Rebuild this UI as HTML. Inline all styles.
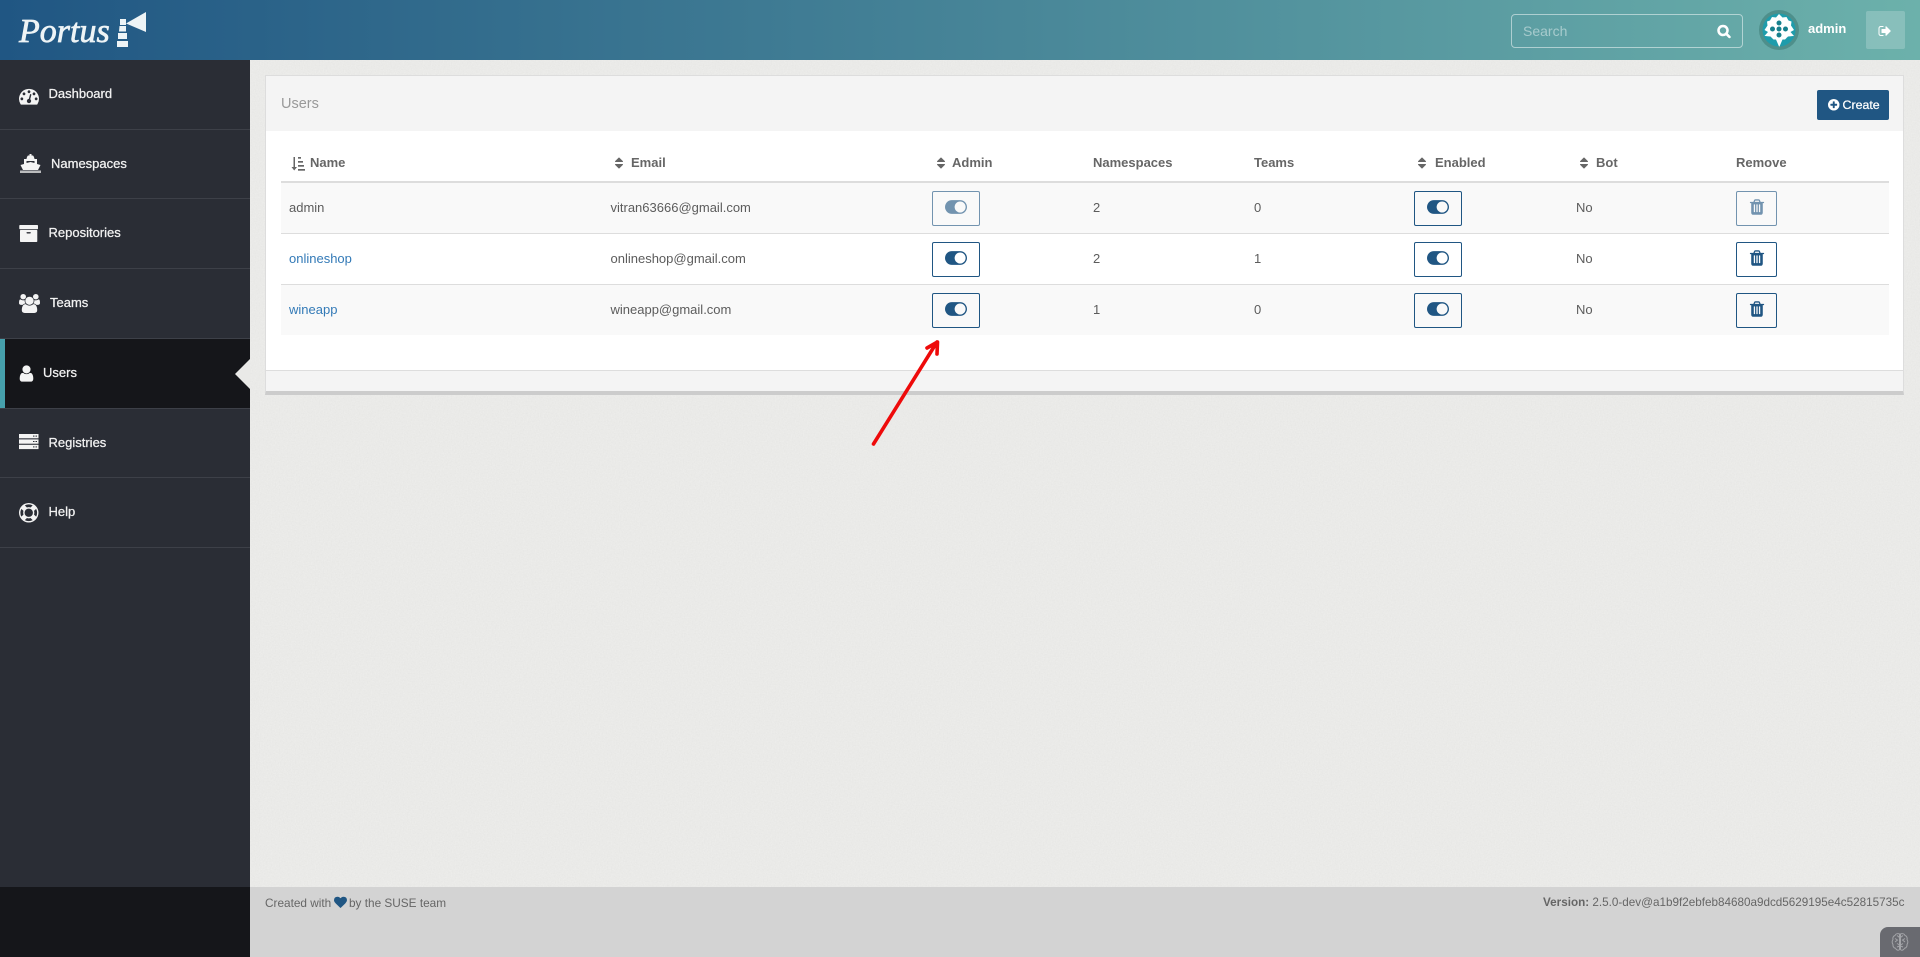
<!DOCTYPE html>
<html lang="en"><head><meta charset="utf-8"><title>Users | Portus</title>
<style>
html,body{margin:0;padding:0;width:1920px;height:957px;overflow:hidden;background:#e9e9e7;font-family:"Liberation Sans",Arial,sans-serif;font-size:13px;color:#5c5c5c}
*{box-sizing:border-box}
.a{position:absolute}
.t{position:absolute;line-height:20px;white-space:nowrap}
svg{position:absolute;display:block;overflow:visible}
#hd{left:0;top:0;width:1920px;height:60px;background:linear-gradient(90deg,#205683 0%,#6cb1ab 100%)}
#sb{left:0;top:60px;width:250px;height:827px;background:#2a2d35}
.nv{position:absolute;left:0;width:250px;height:1px;background:#3d4048}
.m{color:#f2f2f2;-webkit-text-stroke:.25px #f2f2f2;font-size:13px}
.h{color:#666;font-weight:bold;font-size:13px}
.btn{position:absolute;width:48px;height:35px;border:1px solid #205683;border-radius:2px}
.rm{width:41px}
.off{opacity:.62}
a{color:#337ab7;text-decoration:none}
</style></head><body>
<svg width="0" height="0" style="left:0;top:0"><defs>
<symbol id="sort" viewBox="0 0 1792 1792"><path fill="#666" d="M1408 1088q0 26-19 45l-448 448q-19 19-45 19t-45-19l-448-448q-19-19-19-45t19-45 45-19h896q26 0 45 19t19 45zm0-384q0 26-19 45t-45 19h-896q-26 0-45-19t-19-45 19-45l448-448q19-19 45-19t45 19l448 448q19 19 19 45z"/></symbol>
<symbol id="tog" viewBox="0 0 2048 1792"><path fill="#205683" d="M0 896q0-130 51-248.500t136.500-204 204-136.500 248.500-51h768q130 0 248.500 51t204 136.500 136.500 204 51 248.500-51 248.500-136.500 204-204 136.500-248.500 51h-768q-130 0-248.500-51t-204-136.500-136.500-204-51-248.500zm1408 512q104 0 198.500-40.500t163.500-109.500 109.500-163.500 40.500-198.500-40.500-198.500-109.500-163.500-163.500-109.500-198.500-40.500-198.500 40.500-163.500 109.500-109.500 163.500-40.500 198.500 40.500 198.500 109.500 163.500 163.500 109.500 198.500 40.500z"/></symbol>
<symbol id="trash" viewBox="0 0 1792 1792"><path fill="#205683" d="M704 1376v-704q0-14-9-23t-23-9h-64q-14 0-23 9t-9 23v704q0 14 9 23t23 9h64q14 0 23-9t9-23zm256 0v-704q0-14-9-23t-23-9h-64q-14 0-23 9t-9 23v704q0 14 9 23t23 9h64q14 0 23-9t9-23zm256 0v-704q0-14-9-23t-23-9h-64q-14 0-23 9t-9 23v704q0 14 9 23t23 9h64q14 0 23-9t9-23zm-544-992h448l-48-117q-7-9-17-11h-317q-10 2-17 11zm928 32v64q0 14-9 23t-23 9h-96v948q0 83-47 143.500t-113 60.500h-832q-66 0-113-58.500t-47-141.500v-952h-96q-14 0-23-9t-9-23v-64q0-14 9-23t23-9h309l70-167q15-37 54-63t79-26h320q40 0 79 26t54 63l70 167h309q14 0 23 9t9 23z"/></symbol>
</defs></svg>
<!-- paper background -->
<svg class="a" style="left:250px;top:60px" width="1670" height="827" viewBox="0 0 1670 827"><defs><filter id="n" x="0" y="0" width="100%" height="100%"><feTurbulence type="fractalNoise" baseFrequency=".75" numOctaves="2" seed="4"/><feColorMatrix values="0 0 0 0 .55 0 0 0 0 .55 0 0 0 0 .53 0 0 0 .5 -.16"/></filter></defs><rect width="1670" height="827" fill="#ececea"/><rect width="1670" height="827" filter="url(#n)" opacity=".5"/></svg>

<div class="a" id="hd"></div>
<!-- logo -->
<div class="t" style="left:19px;top:13px;line-height:38px;font-family:'Liberation Serif',serif;font-style:italic;font-size:34px;color:#eef4f6;-webkit-text-stroke:.7px #eef4f6">Portus</div>
<svg style="left:0;top:0" width="160" height="60" fill="#eef4f6"><path d="M120 19h6v6h-6zM119.500 26h6.500v5.500h-7zM118 33h9v6h-9zM117 41h11v6h-11z"/><path d="M126 23.500 146 12v20z"/></svg>
<!-- search -->
<div class="a" style="left:1511px;top:14px;width:232px;height:34px;border:1px solid rgba(255,255,255,.5);border-radius:4px"></div>
<div class="t" style="left:1523px;top:21px;font-size:14px;color:rgba(255,255,255,.45)">Search</div>
<svg style="left:1717px;top:23.500px" width="14" height="14" viewBox="0 0 1792 1792" fill="#fff" stroke="#fff" stroke-width="70"><path d="M1216 832q0-185-131.500-316.500t-316.500-131.500-316.500 131.500-131.500 316.500 131.500 316.500 316.500 131.500 316.500-131.500 131.500-316.500zm512 832q0 52-38 90t-90 38q-54 0-90-38l-343-342q-179 124-399 124-143 0-273.500-55.500t-225-150-150-225-55.500-273.500 55.500-273.500 150-225 225-150 273.500-55.500 273.500 55.500 225 150 150 225 55.500 273.500q0 220-124 399l343 343q37 37 37 90z"/></svg>
<!-- avatar -->
<svg style="left:1759px;top:10px" width="40" height="40" viewBox="0 0 40 40"><circle cx="20" cy="20" r="20" fill="#4e8f8b"/><circle cx="20" cy="20" r="16.500" fill="#1f9cab"/><path fill="#fff" d="M20 4l3.500 3.500 4-.5 2 3.500 3 1-.5 4 3 4.500-3.500 2 3.500 4-6 .5-3 3-2.500 0-3 7-.5 0-3-7-2.500 0-3-3-6-.5 3.500-4-3.500-2 3-4.500-.5-4 3-1 2-3.500 4 .5z"/><path fill="#1f9cab" d="M6 26l6 1.500 2 3-5-1zM34 26l-6 1.500-2 3 5-1z"/><g fill="#16808d"><circle cx="20" cy="13" r="2.500"/><circle cx="13.500" cy="19" r="2.500"/><circle cx="20" cy="19" r="2.500"/><circle cx="26.500" cy="19" r="2.500"/><circle cx="20" cy="25" r="2.500"/></g></svg>
<div class="t" style="left:1808px;top:19px;color:#fff;font-weight:bold;font-size:13px">admin</div>
<div class="a" style="left:1866px;top:11px;width:39px;height:38px;background:rgba(255,255,255,.2);border-radius:2px"></div>
<svg style="left:1878px;top:24px" width="14" height="14" viewBox="0 0 1792 1792" fill="#fff"><path d="M704 1440q0 4 1 20t.5 26.500-3 23.500-10 19.500-20.500 6.500h-320q-119 0-203.500-84.500t-84.500-203.500v-704q0-119 84.500-203.500t203.500-84.500h320q13 0 22.500 9.500t9.500 22.500q0 4 1 20t.5 26.500-3 23.500-10 19.500-20.500 6.500h-320q-66 0-113 47t-47 113v704q0 66 47 113t113 47h312l11.500 1 11.500 3 8 5.500 7 9 2 13.500zm928-544q0 26-19 45l-544 544q-19 19-45 19t-45-19-19-45v-288h-448q-26 0-45-19t-19-45v-384q0-26 19-45t45-19h448v-288q0-26 19-45t45-19 45 19l544 544q19 19 19 45z"/></svg>

<!-- sidebar -->
<div class="a" id="sb"></div>
<div class="nv" style="top:129px"></div><div class="nv" style="top:198px"></div><div class="nv" style="top:268px"></div><div class="nv" style="top:338px"></div><div class="nv" style="top:408px"></div><div class="nv" style="top:477px"></div><div class="nv" style="top:547px"></div>
<div class="a" style="left:0;top:339px;width:250px;height:69px;background:#15161a"></div>
<div class="a" style="left:0;top:339px;width:5px;height:69px;background:#46a0ac"></div>
<div class="a" style="left:235px;top:359px;width:0;height:0;border-top:15px solid transparent;border-bottom:15px solid transparent;border-right:15px solid #e9e9e7"></div>
<div class="a" style="left:0;top:887px;width:250px;height:70px;background:#15161a"></div>

<svg style="left:19px;top:85.500px" width="20" height="20" viewBox="0 0 1792 1792" fill="#f4f4f4"><path d="M384 1152q0-53-37.500-90.500t-90.500-37.500-90.500 37.500-37.500 90.500 37.500 90.500 90.500 37.500 90.500-37.500 37.500-90.500zm192-448q0-53-37.500-90.500t-90.500-37.500-90.500 37.500-37.500 90.500 37.500 90.500 90.500 37.500 90.500-37.500 37.500-90.500zm428 481l101-382q6-26-7.500-48.500t-38.500-29.500-48 6.500-30 39.500l-101 382q-60 5-107 43.500t-63 98.500q-20 77 20 146t117 89 146-20 89-117q16-60-6-117t-72-91zm660-33q0-53-37.500-90.500t-90.500-37.500-90.500 37.500-37.500 90.500 37.500 90.500 90.500 37.500 90.500-37.500 37.500-90.500zm-640-640q0-53-37.500-90.500t-90.500-37.500-90.500 37.500-37.500 90.500 37.500 90.500 90.500 37.500 90.500-37.500 37.500-90.500zm448 192q0-53-37.500-90.500t-90.500-37.500-90.500 37.500-37.500 90.500 37.500 90.500 90.500 37.500 90.500-37.500 37.500-90.500zm320 448q0 261-141 483-19 29-54 29h-1402q-35 0-54-29-141-221-141-483 0-182 71-348t191-286 286-191 348-71 348 71 286 191 191 286 71 348z"/></svg>
<svg style="left:20px;top:154px" width="21" height="19" viewBox="0 0 21 19" fill="#f4f4f4"><path d="M8 1.500h1.500V0h2v1.500H13c.8.700 1.200 2 1.500 3.500h-8C6.800 3.500 7.200 2.200 8 1.500zM4 5h13v5l3.500 1-2.500 5H3L.5 11 4 10zM6.500 7v2l4-1 4 1V7z"/><path d="M0 16.500h21v2.500H0z" opacity=".72"/></svg>
<svg style="left:20px;top:225px" width="18" height="17" viewBox="128 128 1600 1536" preserveAspectRatio="none" fill="#f4f4f4"><path d="M1088 832q0-26-19-45t-45-19h-256q-26 0-45 19t-19 45 19 45 45 19h256q26 0 45-19t19-45zm576-192v960q0 26-19 45t-45 19h-1408q-26 0-45-19t-19-45v-960q0-26 19-45t45-19h1408q26 0 45 19t19 45zm64-448v256q0 26-19 45t-45 19h-1536q-26 0-45-19t-19-45v-256q0-26 19-45t45-19h1536q26 0 45 19t19 45z"/></svg>
<svg style="left:19px;top:294px" width="21" height="19" viewBox="0 0 1920 1792" preserveAspectRatio="none" fill="#f4f4f4"><path d="M593 896q-162 5-265 128h-134q-82 0-138-40.500t-56-118.500q0-353 124-353 6 0 43.500 21t97.500 42.500 119 21.500q67 0 133-23-5 37-5 66 0 139 81 256zm1071 637q0 120-73 189.500t-194 69.500h-874q-121 0-194-69.500t-73-189.500q0-53 3.500-103.500t14-109 26.500-108.500 43-97.500 62-81 85.500-53.500 111.500-20q10 0 43 21.500t73 48 107 48 135 21.500 135-21.500 107-48 73-48 43-21.500q61 0 111.500 20t85.500 53.500 62 81 43 97.500 26.500 108.500 14 109 3.500 103.500zm-1024-1277q0 106-75 181t-181 75-181-75-75-181 75-181 181-75 181 75 75 181zm704 384q0 159-112.500 271.500t-271.500 112.500-271.500-112.500-112.500-271.500 112.500-271.500 271.500-112.500 271.500 112.500 112.500 271.500zm576 225q0 78-56 118.500t-138 40.500h-134q-103-123-265-128 81-117 81-256 0-29-5-66 66 23 133 23 59 0 119-21.500t97.500-42.500 43.500-21q124 0 124 353zm-128-609q0 106-75 181t-181 75-181-75-75-181 75-181 181-75 181 75 75 181z"/></svg>
<svg style="left:16.500px;top:363.500px" width="19" height="19" viewBox="0 0 1792 1792" fill="#f4f4f4"><path d="M1536 1399q0 109-62.500 187t-150.500 78h-854q-88 0-150.500-78t-62.500-187q0-85 8.500-160.500t31.500-152 58.500-131 94-89 134.500-34.500q131 128 313 128t313-128q76 0 134.500 34.500t94 89 58.500 131 31.500 152 8.500 160.500zm-256-887q0 159-112.500 271.500t-271.500 112.500-271.500-112.500-112.500-271.500 112.500-271.500 271.500-112.500 271.500 112.500 112.500 271.500z"/></svg>
<svg style="left:19px;top:434px" width="20" height="15" viewBox="0 0 20 15"><g fill="#f4f4f4"><rect width="19.500" height="4.300"/><rect y="5.400" width="19.500" height="4.300"/><rect y="10.800" width="19.500" height="4.300"/></g><g fill="#2a2d35"><rect x="14" y="1.600" width="1.500" height="1"/><rect x="16.500" y="1.600" width="1.500" height="1"/><rect x="14" y="7" width="1.500" height="1"/><rect x="16.500" y="7" width="1.500" height="1"/><rect x="14" y="12.400" width="1.500" height="1"/><rect x="16.500" y="12.400" width="1.500" height="1"/></g></svg>
<svg style="left:19px;top:503px" width="19.500" height="19.500" viewBox="0 0 1792 1792" fill="#f4f4f4"><path d="M896 0q182 0 348 71t286 191 191 286 71 348-71 348-191 286-286 191-348 71-348-71-286-191-191-286-71-348 71-348 191-286 286-191 348-71zm0 128q-190 0-361 90l194 194q82-28 167-28t167 28l194-194q-171-90-361-90zm-678 1129l194-194q-28-82-28-167t28-167l-194-194q-90 171-90 361t90 361zm678 407q190 0 361-90l-194-194q-82 28-167 28t-167-28l-194 194q171 90 361 90zm0-384q159 0 271.500-112.500t112.500-271.500-112.500-271.500-271.500-112.500-271.500 112.500-112.500 271.500 112.500 271.500 271.500 112.500zm484-217l194 194q90-171 90-361t-90-361l-194 194q28 82 28 167t-28 167z"/></svg>

<div class="t m" style="left:48.500px;top:83.500px">Dashboard</div>
<div class="t m" style="left:51px;top:153.500px">Namespaces</div>
<div class="t m" style="left:48.500px;top:222.500px">Repositories</div>
<div class="t m" style="left:50px;top:292.500px">Teams</div>
<div class="t m" style="left:43px;top:362.500px">Users</div>
<div class="t m" style="left:48.500px;top:432.500px">Registries</div>
<div class="t m" style="left:48.500px;top:501.500px">Help</div>

<!-- panel -->
<div class="a" style="left:265px;top:75px;width:1639px;height:320px;background:#fff;border:1px solid #ddd;border-bottom:4px solid #ccc"></div>
<div class="a" style="left:266px;top:76px;width:1637px;height:55px;background:#f4f4f4"></div>
<div class="a" style="left:266px;top:370px;width:1637px;height:21px;background:#f4f4f4;border-top:1px solid #ddd"></div>
<div class="t" style="left:281px;top:94px;font-size:14.500px;color:#999">Users</div>
<div class="a" style="left:1817px;top:90px;width:72px;height:30px;background:#205683;border-radius:2px"></div>
<svg style="left:1828px;top:99px" width="11.500" height="11.500" viewBox="128 128 1536 1536" fill="#fff"><path d="M1344 960v-128q0-26-19-45t-45-19h-256v-256q0-26-19-45t-45-19h-128q-26 0-45 19t-19 45v256h-256q-26 0-45 19t-19 45v128q0 26 19 45t45 19h256v256q0 26 19 45t45 19h128q26 0 45-19t19-45v-256h256q26 0 45-19t19-45zm320-64q0 209-103 385.500t-279.500 279.500-385.500 103-385.500-103-279.500-279.500-103-385.500 103-385.500 279.500-279.500 385.500-103 385.500 103 279.500 279.500 103 385.500z"/></svg>
<div class="t" style="left:1842.500px;top:95px;color:#fff;font-size:12.400px;-webkit-text-stroke:.25px #fff">Create</div>

<!-- table -->
<div class="a" style="left:281px;top:181px;width:1608px;height:2px;background:#ddd"></div>
<div class="a" style="left:281px;top:183px;width:1608px;height:50px;background:#f9f9f9"></div>
<div class="a" style="left:281px;top:233px;width:1608px;height:1px;background:#ddd"></div>
<div class="a" style="left:281px;top:284px;width:1608px;height:1px;background:#ddd"></div>
<div class="a" style="left:281px;top:285px;width:1608px;height:50px;background:#f9f9f9"></div>

<svg style="left:291px;top:156px" width="14" height="15" viewBox="0 0 14 15" fill="#666"><path d="M2.500 1h1.500v10h2L3.200 14.500.5 11h2z"/><rect x="7" y="1" width="3" height="1.700"/><rect x="7" y="5" width="5" height="1.700"/><rect x="7" y="9" width="6" height="1.700"/><rect x="7" y="13" width="7" height="1.700"/></svg>
<div class="t h" style="left:310px;top:153px">Name</div>
<svg style="left:612px;top:155.500px" width="14" height="14"><use href="#sort"/></svg>
<div class="t h" style="left:631px;top:153px">Email</div>
<svg style="left:934px;top:155.500px" width="14" height="14"><use href="#sort"/></svg>
<div class="t h" style="left:952px;top:153px">Admin</div>
<div class="t h" style="left:1093px;top:153px">Namespaces</div>
<div class="t h" style="left:1254px;top:153px">Teams</div>
<svg style="left:1415px;top:155.500px" width="14" height="14"><use href="#sort"/></svg>
<div class="t h" style="left:1435px;top:153px">Enabled</div>
<svg style="left:1577px;top:155.500px" width="14" height="14"><use href="#sort"/></svg>
<div class="t h" style="left:1596px;top:153px">Bot</div>
<div class="t h" style="left:1736px;top:153px">Remove</div>

<div class="t" style="left:289px;top:198px">admin</div>
<div class="t" style="left:289px;top:249px"><a>onlineshop</a></div>
<div class="t" style="left:289px;top:300px"><a>wineapp</a></div>
<div class="t" style="left:610.500px;top:198px">vitran63666@gmail.com</div>
<div class="t" style="left:610.500px;top:249px">onlineshop@gmail.com</div>
<div class="t" style="left:610.500px;top:300px">wineapp@gmail.com</div>
<div class="t" style="left:1093px;top:198px">2</div><div class="t" style="left:1093px;top:249px">2</div><div class="t" style="left:1093px;top:300px">1</div>
<div class="t" style="left:1254px;top:198px">0</div><div class="t" style="left:1254px;top:249px">1</div><div class="t" style="left:1254px;top:300px">0</div>
<div class="t" style="left:1576px;top:198px">No</div><div class="t" style="left:1576px;top:249px">No</div><div class="t" style="left:1576px;top:300px">No</div>

<!-- toggle buttons -->
<div class="btn off" style="left:932px;top:191px"><svg style="left:12px;top:4px" width="22" height="22"><use href="#tog"/></svg></div>
<div class="btn" style="left:932px;top:242px"><svg style="left:12px;top:4px" width="22" height="22"><use href="#tog"/></svg></div>
<div class="btn" style="left:932px;top:293px"><svg style="left:12px;top:4px" width="22" height="22"><use href="#tog"/></svg></div>
<div class="btn" style="left:1414px;top:191px"><svg style="left:12px;top:4px" width="22" height="22"><use href="#tog"/></svg></div>
<div class="btn" style="left:1414px;top:242px"><svg style="left:12px;top:4px" width="22" height="22"><use href="#tog"/></svg></div>
<div class="btn" style="left:1414px;top:293px"><svg style="left:12px;top:4px" width="22" height="22"><use href="#tog"/></svg></div>
<!-- trash buttons -->
<div class="btn rm off" style="left:1736px;top:191px"><svg style="left:11px;top:6px" width="18" height="18"><use href="#trash"/></svg></div>
<div class="btn rm" style="left:1736px;top:242px"><svg style="left:11px;top:6px" width="18" height="18"><use href="#trash"/></svg></div>
<div class="btn rm" style="left:1736px;top:293px"><svg style="left:11px;top:6px" width="18" height="18"><use href="#trash"/></svg></div>

<!-- red arrow -->
<svg style="left:0;top:0" width="1920" height="957" fill="none" stroke="#ee0a0a" stroke-width="3.600" stroke-linecap="round" stroke-linejoin="round"><path d="M873.500 444 937 342M927 348 937.500 342 937 354"/></svg>

<!-- footer -->
<div class="a" style="left:250px;top:887px;width:1670px;height:70px;background:#d3d3d3"></div>
<div class="t" style="left:265px;top:892.500px;font-size:11.800px;color:#666">Created with</div>
<svg style="left:333.500px;top:896px" width="13" height="13" viewBox="0 128 1792 1600" fill="#205683"><path d="M896 1664q-26 0-44-18l-624-602q-10-8-27.500-26t-55.500-65.500-68-97.500-53.500-121-23.500-138q0-220 127-344t351-124q62 0 126.500 21.500t120 58 95.500 68.500 76 68q36-36 76-68t95.500-68.500 120-58 126.500-21.500q224 0 351 124t127 344q0 221-229 450l-623 600q-18 18-44 18z"/></svg>
<div class="t" style="left:349px;top:892.500px;font-size:11.800px;color:#666">by the SUSE team</div>
<div class="t" style="left:1543px;top:892.500px;font-size:11.700px;color:#666"><b>Version:</b> 2.5.0-dev@a1b9f2ebfeb84680a9dcd5629195e4c52815735c</div>
<div class="a" style="left:1880px;top:927px;width:40px;height:30px;background:#696a70;border-top-left-radius:8px"></div>
<svg style="left:1892px;top:933px" width="16" height="18" viewBox="0 0 16 18" fill="none" stroke="#a3a4a8" stroke-width="1"><path d="M7.500 1C5.500 0 3.500 1 3 2.500 1.200 3 .5 5 1 6.500 0 8 0 10 1 11.500 .7 13.500 2 15 3.500 15.300 4.500 17.300 6.500 17.800 7.500 16.500zM8.500 1C10.500 0 12.500 1 13 2.500 14.800 3 15.500 5 15 6.500 16 8 16 10 15 11.500 15.300 13.500 14 15 12.500 15.300 11.500 17.300 9.500 17.800 8.500 16.500zM3 5.500 5.500 7 3 9M5 10.500 7.500 12M5 14l2.500-1M13 5.500 10.500 7 13 9M11 10.500 8.500 12M11 14l-2.500-1M5 2.500l2.500 2M11 2.500l-2.500 2"/></svg>
</body></html>
